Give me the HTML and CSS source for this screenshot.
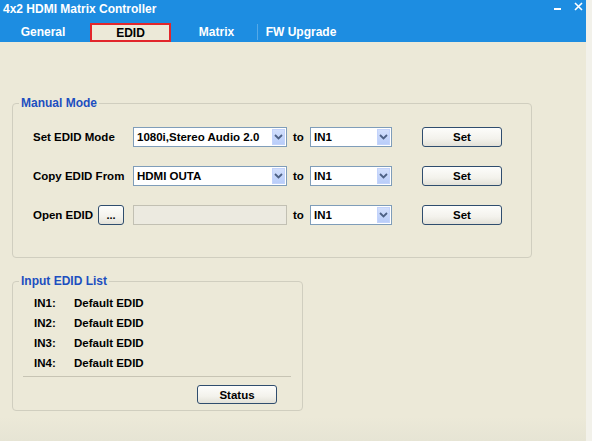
FILE: index.html
```html
<!DOCTYPE html>
<html>
<head>
<meta charset="utf-8">
<link rel="stylesheet" href="styles.css">
</head>
<body>
<div class="window">
  <div class="titlebar">
    <span class="title">4x2 HDMI Matrix Controller</span>
    <span class="controls">
      <svg class="ctl" width="9" height="9" viewBox="0 0 9 9"><rect x="1" y="6" width="7" height="2" fill="#fff"/></svg>
      <svg class="ctl" width="9" height="9" viewBox="0 0 9 9"><path d="M1 1 L8 8 M8 1 L1 8" stroke="#fff" stroke-width="1.6" fill="none"/></svg>
    </span>
  </div>
  <div class="tabs">
    <div class="tab t1">General</div>
    <div class="tab t2 active">EDID</div>
    <div class="tab t3">Matrix</div>
    <div class="tab t4">FW Upgrade</div>
  </div>
  <div class="content">
    <div class="group manual">
      <div class="group-title">Manual Mode</div>
      <div class="rows">
        <div class="row">
          <div class="lbl">Set EDID Mode</div>
          <div class="select wide"><span class="val">1080i,Stereo Audio 2.0</span><span class="arrow"><svg width="9" height="6" viewBox="0 0 9 6"><path d="M1 1 L4.5 4.5 L8 1" stroke="#4d6185" stroke-width="1.8" fill="none"/></svg></span></div>
          <div class="to">to</div>
          <div class="select narrow"><span class="val">IN1</span><span class="arrow"><svg width="9" height="6" viewBox="0 0 9 6"><path d="M1 1 L4.5 4.5 L8 1" stroke="#4d6185" stroke-width="1.8" fill="none"/></svg></span></div>
          <button class="btn set">Set</button>
        </div>
        <div class="row">
          <div class="lbl">Copy EDID From</div>
          <div class="select wide"><span class="val">HDMI OUTA</span><span class="arrow"><svg width="9" height="6" viewBox="0 0 9 6"><path d="M1 1 L4.5 4.5 L8 1" stroke="#4d6185" stroke-width="1.8" fill="none"/></svg></span></div>
          <div class="to">to</div>
          <div class="select narrow"><span class="val">IN1</span><span class="arrow"><svg width="9" height="6" viewBox="0 0 9 6"><path d="M1 1 L4.5 4.5 L8 1" stroke="#4d6185" stroke-width="1.8" fill="none"/></svg></span></div>
          <button class="btn set">Set</button>
        </div>
        <div class="row">
          <div class="lbl">Open EDID<button class="btn browse">...</button></div>
          <div class="field"></div>
          <div class="to">to</div>
          <div class="select narrow"><span class="val">IN1</span><span class="arrow"><svg width="9" height="6" viewBox="0 0 9 6"><path d="M1 1 L4.5 4.5 L8 1" stroke="#4d6185" stroke-width="1.8" fill="none"/></svg></span></div>
          <button class="btn set">Set</button>
        </div>
      </div>
    </div>
    <div class="group inputs">
      <div class="group-title">Input EDID List</div>
      <div class="list">
        <div class="item"><span class="in">IN1:</span><span>Default EDID</span></div>
        <div class="item"><span class="in">IN2:</span><span>Default EDID</span></div>
        <div class="item"><span class="in">IN3:</span><span>Default EDID</span></div>
        <div class="item"><span class="in">IN4:</span><span>Default EDID</span></div>
      </div>
      <div class="sep"></div>
      <div class="status-row"><button class="btn status">Status</button></div>
    </div>
  </div>
</div>
</body>
</html>
```

FILE: styles.css
```css
html, body {
  margin: 0;
  padding: 0;
}
body {
  width: 592px;
  height: 441px;
  background: #f2f1ea;
  font-family: "Liberation Sans", Arial, sans-serif;
  font-weight: bold;
  font-size: 11.5px;
  color: #000;
  overflow: hidden;
}
.window {
  width: 586px;
  height: 441px;
  display: flex;
  flex-direction: column;
}
.titlebar {
  height: 22px;
  background: #1d8de1;
  color: #fff;
  display: flex;
  align-items: center;
  justify-content: space-between;
}
.title {
  padding-left: 3px;
  margin-top: -5px;
  font-size: 12px;
}
.controls {
  display: flex;
  gap: 12px;
  margin-right: 3px;
  margin-top: -9px;
}
.tabs {
  height: 20px;
  background: #1d8de1;
  display: flex;
  padding-left: 3px;
  color: #fff;
  font-size: 12px;
}
.tab {
  display: flex;
  align-items: center;
  justify-content: center;
  height: 20px;
}
.t1 { width: 80px; }
.t2 {
  width: 77px;
  margin-left: 7px;
  margin-top: 1px;
  height: 15px;
  background: #ece9d8;
  border: 2px solid #e2262b;
  color: #000;
}
.t3 {
  width: 81px;
  margin-left: 5px;
  border-right: 1px solid rgba(255,255,255,0.25);
  height: 16px;
  margin-top: 2px;
}
.t4 { width: 86px; }
.content {
  flex: 1;
  background: linear-gradient(to bottom, #ece9d8 0%, #ece9d8 94%, #e6e4d4 100%);
  padding: 61px 0 0 12px;
}
.group {
  border: 1px solid #d0cebf;
  border-radius: 4px;
}
.group-title {
  width: fit-content;
  margin: -8px 0 0 6px;
  padding: 0 2px;
  line-height: 14px;
  background: #ece9d8;
  color: #1d4fc0;
  font-size: 12px;
}
.manual {
  width: 518px;
  padding-bottom: 32px;
}
.rows {
  display: flex;
  flex-direction: column;
  gap: 19px;
  margin-top: 17px;
}
.row {
  display: flex;
  align-items: center;
  height: 20px;
  padding-left: 20px;
}
.lbl {
  width: 100px;
  display: flex;
  align-items: center;
}
.select {
  box-sizing: border-box;
  height: 20px;
  background: #fff;
  border: 1px solid #7f9db9;
  display: flex;
  align-items: center;
  justify-content: space-between;
}
.select .val {
  padding-left: 3px;
}
.wide { width: 154px; }
.narrow { width: 82px; }
.arrow {
  width: 13px;
  height: 16px;
  margin-right: 1px;
  box-sizing: border-box;
  background: linear-gradient(to bottom, #d2dffc 0%, #b9cdf9 100%);
  border: 1px solid #c3d3fb;
  display: flex;
  align-items: center;
  justify-content: center;
}
.to {
  width: 17px;
  margin-left: 6px;
}
.field {
  box-sizing: border-box;
  width: 154px;
  height: 20px;
  background: #eceae0;
  border: 1px solid #c2c0b3;
}
.btn {
  font-family: inherit;
  font-weight: bold;
  font-size: 11.5px;
  color: #000;
  box-sizing: border-box;
  border: 1px solid #2f4d6e;
  border-radius: 3px;
  background: linear-gradient(to bottom, #fdfdfb 0%, #f3f2ec 60%, #e3e1d8 100%);
  padding: 0;
  display: flex;
  align-items: center;
  justify-content: center;
}
.set {
  width: 80px;
  height: 20px;
  margin-left: 30px;
}
.browse {
  width: 26px;
  height: 20px;
  margin-left: auto;
  margin-right: 9px;
  font-size: 11px;
}
.inputs {
  width: 289px;
  margin-top: 23px;
  padding-bottom: 6px;
}
.list {
  margin-top: 5px;
  padding-left: 21px;
}
.item {
  height: 20px;
  display: flex;
  align-items: center;
}
.in {
  width: 40px;
}
.sep {
  height: 0;
  border-top: 1px solid #c7c4b4;
  margin: 3px 11px 0 10px;
}
.status-row {
  display: flex;
  justify-content: flex-end;
  margin-top: 8px;
  padding-right: 25px;
}
.status {
  width: 80px;
  height: 19px;
}
```
